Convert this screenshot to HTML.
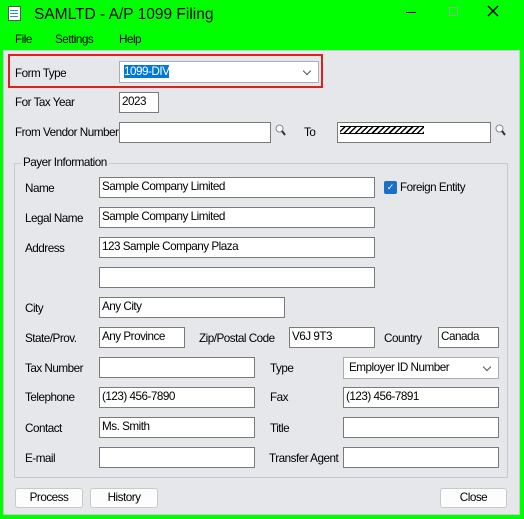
<!DOCTYPE html><html><head><style>
*{margin:0;padding:0;box-sizing:border-box}
body{width:524px;height:519px;background:#00ff00;position:relative;overflow:hidden;font-family:"Liberation Sans",sans-serif;font-size:12px;color:#000}
.a{position:absolute;white-space:nowrap}
.l{position:absolute;line-height:14px;white-space:nowrap;letter-spacing:-0.5px;font-size:11.7px}
.i{position:absolute;background:#fff;border:1px solid #7a7a7a;height:21px;line-height:17px;padding-left:2px;white-space:nowrap;letter-spacing:-0.5px;font-size:11.7px}
.c{position:absolute;background:#fff;border:1px solid #adadad;height:22px;line-height:19px;padding-left:5px;letter-spacing:-0.5px;font-size:11.7px}
.c:after{content:"";position:absolute;right:8px;top:6px;width:5px;height:5px;border-right:1px solid #555;border-bottom:1px solid #555;transform:rotate(45deg)}
.b{position:absolute;background:#fdfdfd;border:1px solid #c9c9c9;border-radius:3px;height:20px;line-height:18px;text-align:center;letter-spacing:-0.5px;font-size:11.7px}
.mg{position:absolute;width:11px;height:13px}
</style></head><body>
<div class="a" style="left:8px;top:6px;width:13px;height:15px;background:#fff;border:1px solid #555"></div>
<div class="a" style="left:10px;top:10px;width:8px;height:1px;background:#2a8be0;box-shadow:0 3px #2a8be0,0 6px #2a8be0"></div>
<div class="a" style="left:34px;top:6px;font-size:15.5px">SAMLTD - A/P 1099 Filing</div>
<div class="a" style="left:406px;top:12px;width:10px;height:1px;background:#000"></div>
<div class="a" style="left:449px;top:7px;width:9px;height:9px;border:1px solid #7fb87f"></div>
<svg class="a" style="left:487px;top:5px" width="12" height="12" viewBox="0 0 12 12"><path d="M1 1L11 11M11 1L1 11" stroke="#000" stroke-width="1.5"/></svg>
<div class="l" style="left:15px;top:33px">File</div>
<div class="l" style="left:55px;top:33px">Settings</div>
<div class="l" style="left:119px;top:33px">Help</div>
<div class="a" style="left:3px;top:50px;width:517px;height:465px;background:#e6e7eb;border:1px solid #c8c9cc"></div>
<div class="a" style="left:8px;top:54px;width:315px;height:34px;border:2px solid #e02020"></div>
<div class="l" style="left:15px;top:67px">Form Type</div>
<div class="c" style="left:119px;top:61px;width:200px;padding-left:4px"><span style="background:#0078d7;color:#fff">1099-DIV</span></div>
<div class="l" style="left:15px;top:96px">For Tax Year</div>
<div class="i" style="left:119px;top:92px;width:40px">2023</div>
<div class="l" style="left:15px;top:126px">From Vendor Number</div>
<div class="i" style="left:119px;top:122px;width:152px"></div>
<svg class="mg" style="left:275px;top:124px" viewBox="0 0 11 13"><circle cx="4.5" cy="4.5" r="3.5" fill="#fff" stroke="#888"/><path d="M7 7l3 4" stroke="#333" stroke-width="2"/></svg>
<div class="l" style="left:304px;top:126px">To</div>
<div class="i" style="left:337px;top:122px;width:154px;padding:0"><div style="position:absolute;left:2px;top:3px;width:84px;height:8px;border-top:1px solid #000;border-bottom:1px solid #000;background:repeating-linear-gradient(135deg,#fff 0 2.5px,#000 2.5px 4px)"></div></div>
<svg class="mg" style="left:495px;top:124px" viewBox="0 0 11 13"><circle cx="4.5" cy="4.5" r="3.5" fill="#fff" stroke="#888"/><path d="M7 7l3 4" stroke="#333" stroke-width="2"/></svg>
<div class="a" style="left:14px;top:163px;width:494px;height:315px;border:1px solid #c8c9cc"></div>
<div class="l" style="left:21px;top:156px;background:#e6e7eb;padding:0 2px">Payer Information</div>
<div class="l" style="left:25px;top:182px">Name</div><div class="i" style="left:99px;top:177px;width:276px">Sample Company Limited</div>
<div class="a" style="left:384px;top:181px;width:13px;height:13px;background:#1a6fc8;border-radius:2px;color:#fff;font-size:9px;line-height:13px;text-align:center">✓</div>
<div class="l" style="left:400px;top:181px">Foreign Entity</div>
<div class="l" style="left:25px;top:212px">Legal Name</div><div class="i" style="left:99px;top:207px;width:276px">Sample Company Limited</div>
<div class="l" style="left:25px;top:242px">Address</div><div class="i" style="left:99px;top:237px;width:276px">123 Sample Company Plaza</div>
<div class="i" style="left:99px;top:267px;width:276px"></div>
<div class="l" style="left:25px;top:302px">City</div><div class="i" style="left:99px;top:297px;width:186px">Any City</div>
<div class="l" style="left:25px;top:332px">State/Prov.</div><div class="i" style="left:99px;top:327px;width:86px">Any Province</div>
<div class="l" style="left:199px;top:332px">Zip/Postal Code</div><div class="i" style="left:289px;top:327px;width:86px">V6J 9T3</div>
<div class="l" style="left:384px;top:332px">Country</div><div class="i" style="left:438px;top:327px;width:61px">Canada</div>
<div class="l" style="left:25px;top:362px">Tax Number</div><div class="i" style="left:99px;top:357px;width:156px"></div>
<div class="l" style="left:270px;top:362px">Type</div><div class="c" style="left:343px;top:357px;width:156px">Employer ID Number</div>
<div class="l" style="left:25px;top:391px">Telephone</div><div class="i" style="left:99px;top:387px;width:156px">(123) 456-7890</div>
<div class="l" style="left:270px;top:391px">Fax</div><div class="i" style="left:343px;top:387px;width:156px">(123) 456-7891</div>
<div class="l" style="left:25px;top:422px">Contact</div><div class="i" style="left:99px;top:417px;width:156px">Ms. Smith</div>
<div class="l" style="left:270px;top:422px">Title</div><div class="i" style="left:343px;top:417px;width:156px"></div>
<div class="l" style="left:25px;top:452px">E-mail</div><div class="i" style="left:99px;top:447px;width:156px"></div>
<div class="l" style="left:269px;top:452px">Transfer Agent</div><div class="i" style="left:343px;top:447px;width:156px"></div>
<div class="b" style="left:15px;top:488px;width:68px">Process</div>
<div class="b" style="left:90px;top:488px;width:68px">History</div>
<div class="b" style="left:440px;top:488px;width:67px">Close</div>
</body></html>
